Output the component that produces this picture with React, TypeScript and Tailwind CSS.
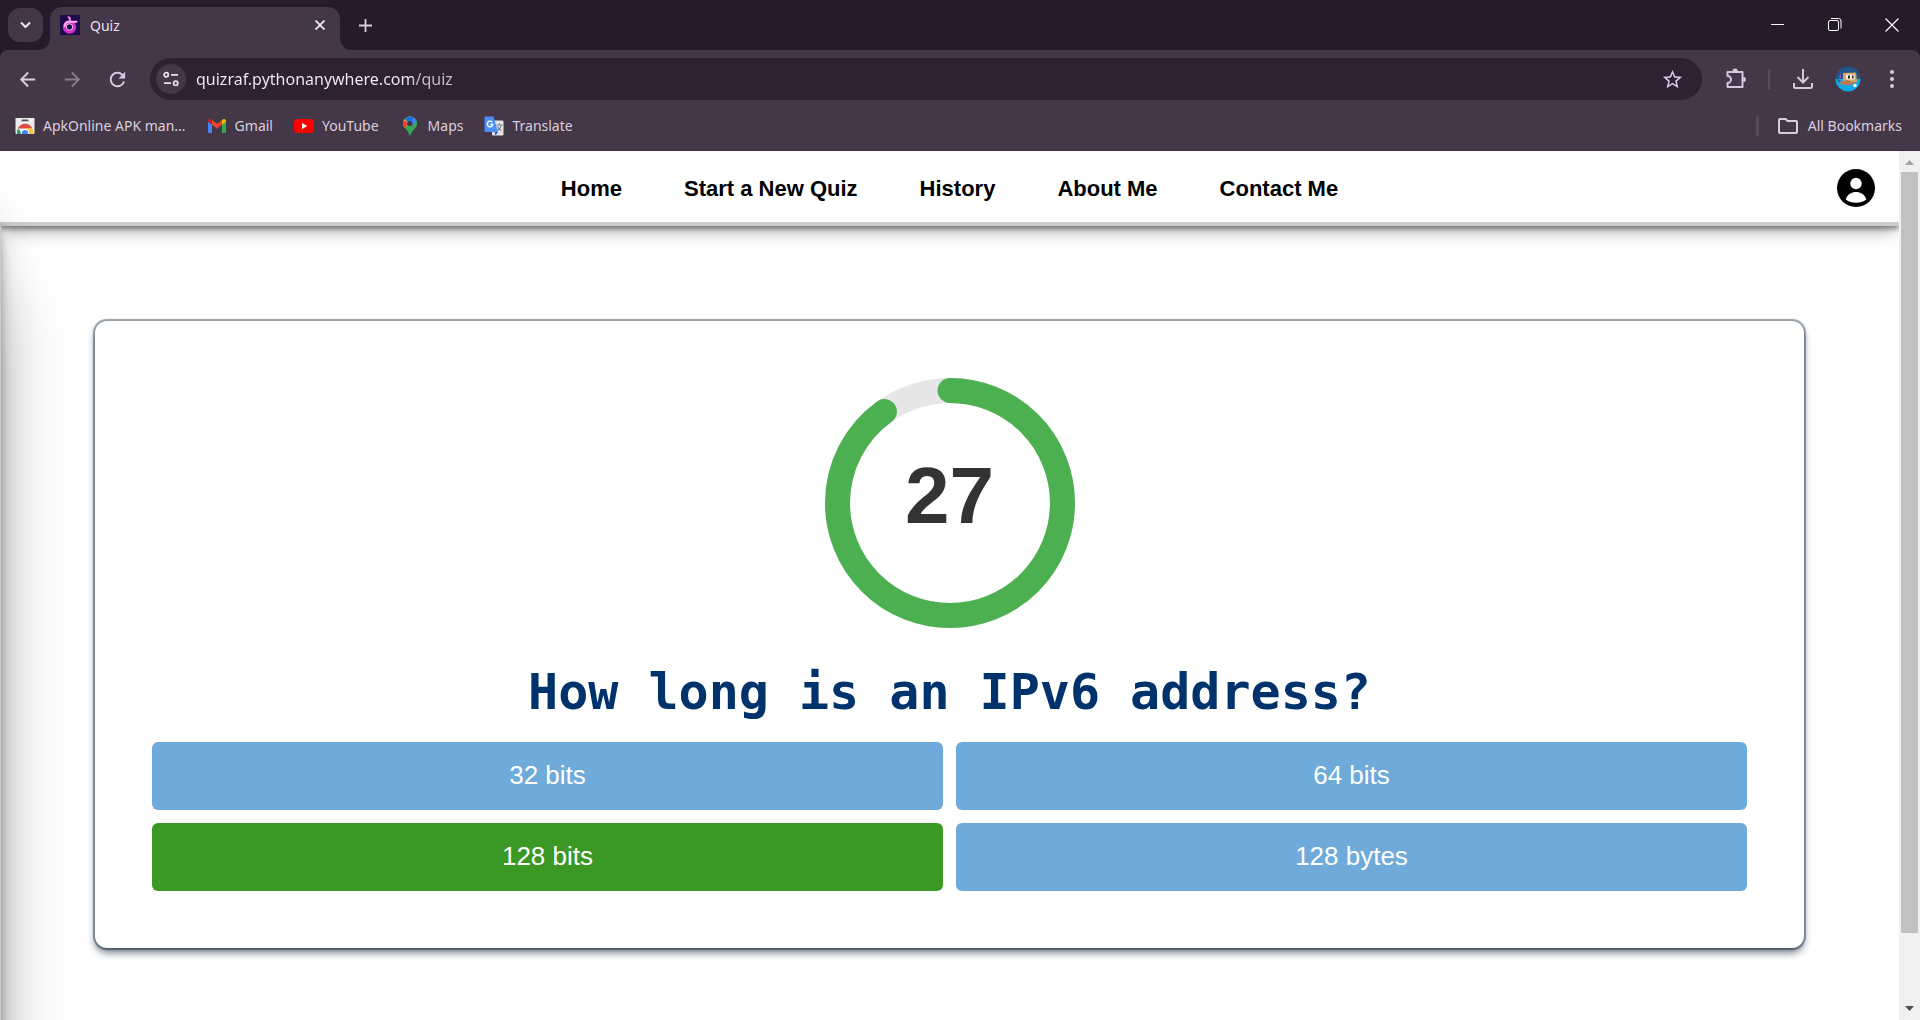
import React from "react";
import { MdArrowBack, MdArrowForward, MdRefresh, MdStarBorder, MdOutlineFolder } from "react-icons/md";

const answers = [
  { label: "32 bits", correct: false },
  { label: "64 bits", correct: false },
  { label: "128 bits", correct: true },
  { label: "128 bytes", correct: false },
];

const navLinks = ["Home", "Start a New Quiz", "History", "About Me", "Contact Me"];

function QuizFavicon() {
  return (
    <svg width="20" height="20" viewBox="0 0 20 20" aria-hidden="true">
      <rect width="20" height="20" fill="#1f0a4a" />
      <circle cx="9.5" cy="12" r="5" fill="none" stroke="#d62fd0" strokeWidth="3.4" />
      <path d="M4.6 11a5 5 0 0 1 4.9-4.2h7" fill="none" stroke="#ffb0f4" strokeWidth="2" strokeLinecap="round" />
      <path d="M8.4 2.2q2 .6 1.6 3" fill="none" stroke="#ff8bef" strokeWidth="1.8" strokeLinecap="round" />
      <circle cx="9.5" cy="12" r="3.2" fill="#1f0a4a" stroke="#ffc6f8" strokeWidth="1" />
    </svg>
  );
}

function TuneIcon() {
  return (
    <svg width="16" height="16" viewBox="0 0 16 16" fill="none" stroke="#eadcf0" strokeWidth="1.8" aria-hidden="true">
      <circle cx="3.2" cy="3.8" r="2.1" />
      <path d="M8 3.8h7M1 12.2h7" />
      <circle cx="12.7" cy="12.2" r="2.1" />
    </svg>
  );
}

function PuzzleIcon() {
  return (
    <svg width="24" height="24" viewBox="0 0 24 24" aria-hidden="true">
      <path
        d="M3.5 5h15v15h-15v-4a3 3 0 0 0 0-7z"
        fill="none"
        stroke="#d8c5de"
        strokeWidth="2"
        strokeLinejoin="round"
      />
      <path d="M8.4 4.2a2.7 2.7 0 0 1 5.4 0zM19.2 9.8a2.7 2.7 0 0 1 0 5.4z" fill="#d8c5de" />
    </svg>
  );
}

function DownloadIcon() {
  return (
    <svg width="22" height="22" viewBox="0 0 22 22" fill="none" stroke="#d8c5de" strokeWidth="2" aria-hidden="true">
      <path d="M11 1v13M5.5 9l5.5 5.5L16.500 9M2 15v3.500a1.500 1.500 0 0 0 1.500 1.500h15a1.500 1.500 0 0 0 1.500-1.500V15" />
    </svg>
  );
}

function Avatar() {
  return (
    <svg width="26" height="26" viewBox="0 0 26 26" aria-hidden="true">
      <defs>
        <clipPath id="avatar">
          <circle cx="13" cy="13" r="12.5" />
        </clipPath>
      </defs>
      <g clipPath="url(#avatar)">
        <rect width="26" height="26" fill="#215488" />
        <rect y="13" width="26" height="13" fill="#10a8e6" />
        <path d="M8 7l13-.5 1 9.500H8z" fill="#d9a85c" />
        <path d="M11 8.500h8.500v5H11z" fill="#f4efe2" />
        <path d="M13 9.500h2v3h-2zM17 9.500h1.500v3H17z" fill="#2a2430" />
        <path d="M4.500 9l1.500-1.500v5l-2 .5z" fill="#8b4bc6" />
        <path d="M4 16l8-2 9 3-7 2.500-8-1z" fill="#b57a5a" />
        <path d="M2 13l4 1-2 3z" fill="#1b6f95" />
        <circle cx="20" cy="19.500" r="1.800" fill="#f2f2f2" />
      </g>
    </svg>
  );
}

function WebStoreIcon() {
  return (
    <svg width="20" height="20" viewBox="0 0 20 20" aria-hidden="true">
      <path d="M.5 2h19v14.500a1.500 1.500 0 0 1-1.500 1.500H2a1.500 1.500 0 0 1-1.500-1.500z" fill="#ececec" />
      <rect x="6.500" y="3.500" width="7" height="1.800" rx=".9" fill="#55485a" />
      <path d="M2 18a8 8 0 0 1 1.200-5.800L7 18z" fill="#25a55a" />
      <path d="M2.800 12.500a8 8 0 0 1 14.600 0H10z" fill="#dd4b3e" />
      <path d="M10 12.500h7.400A8 8 0 0 1 18 18h-6z" fill="#fbc83c" />
      <path d="M5.800 18a4.300 4.300 0 1 1 8.400 0z" fill="#fff" />
      <path d="M6.800 18a3.300 3.300 0 1 1 6.400 0z" fill="#4285f4" />
    </svg>
  );
}

function GmailIcon() {
  return (
    <svg width="20" height="20" viewBox="0 0 20 20" aria-hidden="true">
      <path d="M1 5.500L5 8.500V17H2.200A1.200 1.200 0 0 1 1 15.800z" fill="#4285f4" />
      <path d="M15 8.500l4-3v10.300a1.200 1.200 0 0 1-1.200 1.200H15z" fill="#34a853" />
      <path d="M5 4l5 3.800L15 4v4.700l-5 3.800-5-3.800z" fill="#ea4335" />
      <path d="M1 5.500V5a2 2 0 0 1 3.200-1.600L5 4v4.700z" fill="#c5221f" />
      <path d="M15 4l.8-.6A2 2 0 0 1 19 5v.7l-4 3z" fill="#fbbc04" />
    </svg>
  );
}

function YouTubeIcon() {
  return (
    <svg width="20" height="20" viewBox="0 0 20 20" aria-hidden="true">
      <rect y="3" width="20" height="14" rx="3.500" fill="#ff0000" />
      <path d="M8 7l5.200 3L8 13z" fill="#fff" />
    </svg>
  );
}

function MapsIcon() {
  return (
    <svg width="20" height="20" viewBox="0 0 20 20" aria-hidden="true">
      <defs>
        <clipPath id="pin">
          <path d="M10 .5a7 7 0 0 1 7 7c0 4.500-5.400 6.500-6.300 11.300-.2 1-1.200 1-1.400 0C8.400 14 3 12 3 7.500a7 7 0 0 1 7-7z" />
        </clipPath>
      </defs>
      <g clipPath="url(#pin)">
        <rect width="20" height="20" fill="#34a853" />
        <path d="M0 16L17 0H0z" fill="#fbbc04" />
        <path d="M0 2l10 5.500-8 6z" fill="#ea4335" />
        <path d="M3 2L10 7.500 16 0H5z" fill="#1a73e8" />
        <path d="M10 7.500L15 0l6 4-3 2-4 4z" fill="#4285f4" />
        <path d="M17 4v8l-8 8V15z" fill="#34a853" />
      </g>
      <circle cx="10" cy="7.500" r="2.600" fill="#443748" />
    </svg>
  );
}

function TranslateIcon() {
  return (
    <svg width="20" height="20" viewBox="0 0 20 20" aria-hidden="true">
      <rect x="8" y="4.500" width="11.500" height="15" rx="1.200" fill="#e4e4e4" />
      <path d="M1.500.5h8l4.500 15.500H1.500A1.200 1.200 0 0 1 .5 15V1.500a1 1 0 0 1 1-1z" fill="#4d8df6" />
      <path d="M10.500 16H14l-2.500 3.500z" fill="#2a56c6" />
      <path d="M8.200 6.200A2.800 2.800 0 1 0 8.800 8.300H6.200" fill="none" stroke="#fff" strokeWidth="1.300" />
      <path d="M12.500 9h6M15.500 7.500V9M17.500 9c-.5 2.500-2.500 4.500-4 5.500M13.500 10.500c1 2 2.500 3.500 4 4" fill="none" stroke="#6f7f88" strokeWidth="1.100" />
    </svg>
  );
}

const bookmarks = [
  { label: "ApkOnline APK man...", icon: <WebStoreIcon /> },
  { label: "Gmail", icon: <GmailIcon /> },
  { label: "YouTube", icon: <YouTubeIcon /> },
  { label: "Maps", icon: <MapsIcon /> },
  { label: "Translate", icon: <TranslateIcon /> },
];

function TabStrip() {
  return (
    <div className="flex h-[50px] items-end pl-2">
      <button aria-label="Search tabs" className="mb-2 flex h-[34px] w-[35px] items-center justify-center rounded-xl bg-[#443748]">
        <svg width="11" height="8" viewBox="0 0 11 8" fill="none" stroke="#f0e6f3" strokeWidth="2" aria-hidden="true">
          <path d="M1 1.500l4.500 4.500L10 1.500" />
        </svg>
      </button>
      <div className="relative ml-[7px] flex h-[43px] w-[290px] items-center rounded-t-xl bg-[#443748] px-2.5 pb-[7px]">
        <svg className="absolute -left-3 bottom-0" width="12" height="12" aria-hidden="true">
          <path d="M12 0v12H0A12 12 0 0 0 12 0z" fill="#443748" />
        </svg>
        <svg className="absolute -right-3 bottom-0" width="12" height="12" aria-hidden="true">
          <path d="M0 0v12h12A12 12 0 0 1 0 0z" fill="#443748" />
        </svg>
        <QuizFavicon />
        <span className="ml-2.5 flex-1 text-[14px] text-[#eadff0]">Quiz</span>
        <button aria-label="Close tab" className="mr-[5px]">
          <svg width="10" height="10" viewBox="0 0 10 10" stroke="#f4ecf6" strokeWidth="1.800" aria-hidden="true">
            <path d="M.5.5l9 9M9.500.5l-9 9" />
          </svg>
        </button>
      </div>
      <button aria-label="New tab" className="mb-[18px] ml-[19px]">
        <svg width="13" height="13" viewBox="0 0 13 13" stroke="#dccbe3" strokeWidth="1.800" aria-hidden="true">
          <path d="M6.500 0v13M0 6.500h13" />
        </svg>
      </button>
      <div className="mb-[18px] ml-auto flex items-center gap-[43px] pr-[21px]">
        <button aria-label="Minimize">
          <svg width="14" height="14" stroke="#fff" aria-hidden="true">
            <path d="M0 6.500h13" />
          </svg>
        </button>
        <button aria-label="Restore">
          <svg width="14" height="14" fill="none" stroke="#fff" aria-hidden="true">
            <rect x=".5" y="2.500" width="10" height="10" rx="1.500" />
            <path d="M3 .5h7.500a2.500 2.500 0 0 1 2.500 2.500v7.500" />
          </svg>
        </button>
        <button aria-label="Close window">
          <svg width="14" height="14" stroke="#fff" strokeWidth="1.200" aria-hidden="true">
            <path d="M.5.5l13 13M13.500.5l-13 13" />
          </svg>
        </button>
      </div>
    </div>
  );
}

function AddressRow() {
  return (
    <div className="flex h-[58px] items-center pl-4 pr-[21px] text-[#dccbe3]">
      <button aria-label="Back"><MdArrowBack size={23} /></button>
      <button aria-label="Forward" className="ml-[22px] opacity-45"><MdArrowForward size={23} /></button>
      <button aria-label="Reload" className="ml-[22px]"><MdRefresh size={23} /></button>
      <div className="ml-[21px] flex h-[42px] flex-1 items-center rounded-full bg-[#2d2132] pl-1.5 pr-[18px]">
        <button aria-label="Site information" className="flex size-[30px] items-center justify-center rounded-full bg-[#443748]">
          <TuneIcon />
        </button>
        <input
          aria-label="Address"
          defaultValue="quizraf.pythonanywhere.com/quiz"
          className="ml-2.5 min-w-0 flex-1 bg-linear-to-r from-[#f5eef7] from-[217px] to-[#cbbfce] to-[217px] bg-clip-text text-[16px] text-transparent outline-none"
        />
        <button aria-label="Bookmark this page"><MdStarBorder size={23} /></button>
      </div>
      <button aria-label="Extensions" className="ml-[22px]"><PuzzleIcon /></button>
      <span className="ml-5 h-5 w-0.5 bg-[#5a4b60]" />
      <button aria-label="Downloads" className="ml-[22px]"><DownloadIcon /></button>
      <button aria-label="Profile" className="ml-[21px]"><Avatar /></button>
      <button aria-label="Menu" className="ml-6">
        <svg width="14" height="20" fill="#dccbe3" aria-hidden="true">
          <circle cx="7" cy="3" r="2" />
          <circle cx="7" cy="10" r="2" />
          <circle cx="7" cy="17" r="2" />
        </svg>
      </button>
    </div>
  );
}

function BookmarksBar() {
  return (
    <div className="flex h-[43px] items-start border-b border-[#3a2e3f] pl-[15px] pr-[18px] pt-2 text-[14px] leading-5 text-[#dacfde]">
      <div className="flex gap-[21px]">
        {bookmarks.map((b) => (
          <a key={b.label} href="#" className="flex items-center gap-2">
            {b.icon}
            <span>{b.label}</span>
          </a>
        ))}
      </div>
      <span className="ml-auto h-5 w-[3px] rounded bg-[#5a4b60]" />
      <button className="ml-[17px] flex items-center gap-2">
        <MdOutlineFolder size={24} className="-my-0.5" />
        All Bookmarks
      </button>
    </div>
  );
}

function SiteHeader() {
  return (
    <header className="relative flex h-[75px] items-center justify-center bg-white shadow-[0_3px_5px_rgba(0,0,0,0.4),0_9px_16px_-4px_rgba(0,0,0,0.3),inset_0_-4px_0_rgba(0,0,0,0.2)]">
      <nav className="flex gap-[62px] text-[22px] font-bold text-black">
        {navLinks.map((l) => (
          <a key={l} href="#">{l}</a>
        ))}
      </nav>
      <button aria-label="Account" className="absolute right-6 top-[18px]">
        <svg width="38" height="38" viewBox="0 0 38 38" aria-hidden="true">
          <circle cx="19" cy="19" r="19" />
          <circle cx="19" cy="14.500" r="5.700" fill="#fff" />
          <path d="M8.700 30.500C10.500 25 14.500 23 19 23s8.500 2 10.300 7.500C26.500 32.800 23 33.800 19 33.800s-7.500-1-10.300-3.300z" fill="#fff" />
        </svg>
      </button>
    </header>
  );
}

function Timer({ seconds, total }: { seconds: number; total: number }) {
  const length = 2 * Math.PI * 112.5;
  return (
    <div className="relative size-[250px]">
      <svg viewBox="0 0 250 250" fill="none" strokeWidth="25" className="size-full -rotate-90" aria-hidden="true">
        <circle cx="125" cy="125" r="112.500" stroke="#e6e6e6" />
        <circle
          cx="125"
          cy="125"
          r="112.500"
          stroke="#4caf50"
          strokeLinecap="round"
          strokeDasharray={`${(length * seconds) / total} ${length}`}
        />
      </svg>
      <span className="absolute inset-0 flex items-center justify-center pb-[14px] text-[80px] font-bold leading-none text-[#333]">
        {seconds}
      </span>
    </div>
  );
}

function ScrollBar() {
  return (
    <div className="flex w-[21px] flex-col items-center bg-[#f0f0f0]" aria-hidden="true">
      <svg width="21" height="21">
        <path d="M6 14h9l-4.500-5z" fill="#a3a3a3" />
      </svg>
      <div className="flex w-[17px] flex-1 flex-col">
        <div className="flex-[92] bg-[#c1c1c1]" />
        <div className="flex-[8]" />
      </div>
      <svg width="21" height="21">
        <path d="M6 7h9l-4.500 5z" fill="#505050" />
      </svg>
    </div>
  );
}

export default function App() {
  return (
    <div className="flex h-screen flex-col overflow-hidden bg-white font-['Liberation_Sans',Arial,sans-serif]">
      <div className="bg-[#261b2b] font-['Noto_Sans',sans-serif]">
        <TabStrip />
        <div className="rounded-t-lg bg-[#443748]">
          <AddressRow />
          <BookmarksBar />
        </div>
      </div>
      <div className="flex min-h-0 flex-1">
        <div className="relative min-w-0 flex-1 overflow-hidden">
          <SiteHeader />
          <main className="mx-[95px] mt-[95px] flex flex-col items-center rounded-xl bg-white p-[57px] shadow-[0_0_1px_2px_rgba(6,24,44,0.4),0_5px_8px_-1px_rgba(6,24,44,0.65)]">
            <Timer seconds={27} total={30} />
            <h1 className="mb-5 mt-[34px] text-center font-['DejaVu_Sans_Mono',monospace] text-[50px] font-bold leading-[60px] text-[#00336b]">
              How long is an IPv6 address?
            </h1>
            <div className="grid w-full grid-cols-2 gap-[13px]">
              {answers.map((a) => (
                <button
                  key={a.label}
                  className={`h-[68px] rounded-md pb-0.5 text-[26px] text-white ${a.correct ? "bg-[#3b9825]" : "bg-[#6eabda]"}`}
                >
                  {a.label}
                </button>
              ))}
            </div>
          </main>
          <aside
            aria-hidden="true"
            className="pointer-events-none absolute -left-[249px] top-[75px] h-full w-[250px] border-r border-[#ccc] bg-white shadow-[0_68px_69px_rgba(0,0,0,0.25),0_-15px_38px_rgba(0,0,0,0.12),0_5px_8px_rgba(0,0,0,0.12),0_15px_16px_rgba(0,0,0,0.17),0_-4px_6px_rgba(0,0,0,0.09)]"
          />
        </div>
        <ScrollBar />
      </div>
    </div>
  );
}
